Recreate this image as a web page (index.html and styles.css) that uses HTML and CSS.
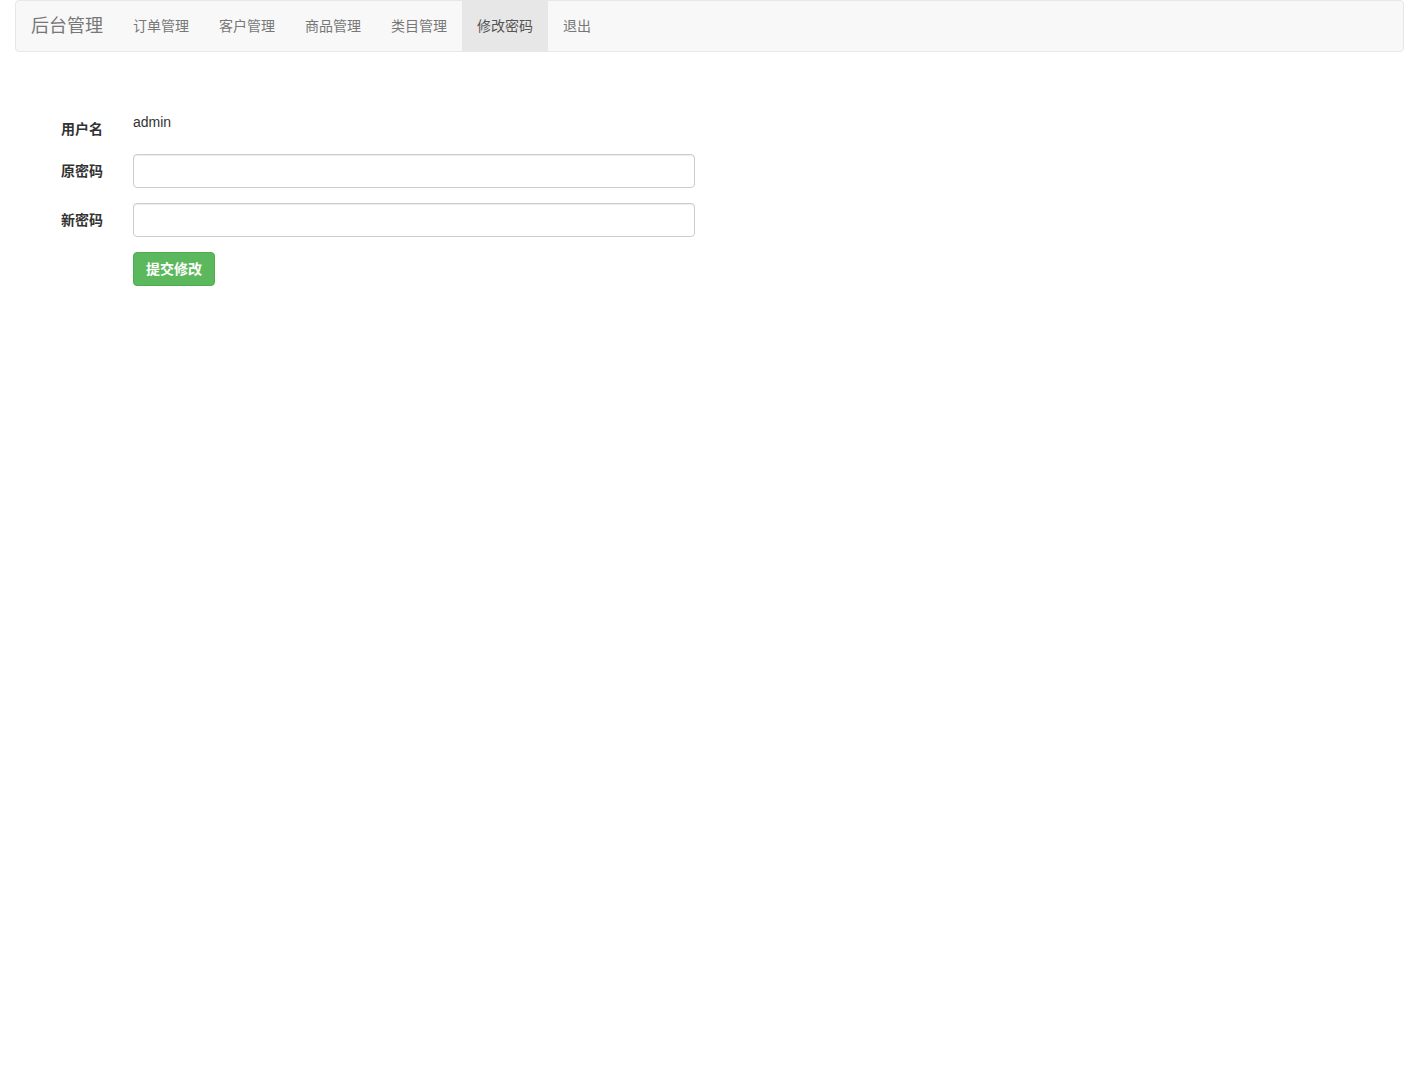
FILE: index.html
```html
<!DOCTYPE html>
<html lang="zh-CN">
<head>
<meta charset="utf-8">
<title>修改密码</title>
<link rel="stylesheet" href="styles.css">
</head>
<body>
<nav class="navbar">
  <a class="brand" href="#">后台管理</a>
  <ul class="nav">
    <li><a href="#">订单管理</a></li>
    <li><a href="#">客户管理</a></li>
    <li><a href="#">商品管理</a></li>
    <li><a href="#">类目管理</a></li>
    <li class="active"><a href="#">修改密码</a></li>
    <li><a href="#">退出</a></li>
  </ul>
</nav>
<form class="form">
  <div class="group">
    <label class="label">用户名</label>
    <div class="field"><span class="static">admin</span></div>
  </div>
  <div class="group">
    <label class="label">原密码</label>
    <div class="field"><input class="input" type="password"></div>
  </div>
  <div class="group">
    <label class="label">新密码</label>
    <div class="field"><input class="input" type="password"></div>
  </div>
  <div class="group">
    <div class="label"></div>
    <div class="field"><button class="btn" type="button">提交修改</button></div>
  </div>
</form>
</body>
</html>
```

FILE: styles.css
```css
* { box-sizing: border-box; }
html, body { margin: 0; padding: 0; background: #fff; }
body {
  font-family: "Liberation Sans", Arial, "Noto Sans CJK SC", sans-serif;
  font-size: 14px;
  line-height: 20px;
  color: #333;
}
.navbar {
  display: flex;
  align-items: stretch;
  height: 52px;
  margin: 0 15px 60px;
  background: #f8f8f8;
  border: 1px solid #e7e7e7;
  border-radius: 4px;
}
.brand {
  padding: 15px;
  font-size: 18px;
  line-height: 20px;
  color: #777;
  text-decoration: none;
}
.nav {
  list-style: none;
  margin: 0;
  padding: 0;
  display: flex;
}
.nav a {
  display: block;
  padding: 15px;
  line-height: 20px;
  color: #777;
  text-decoration: none;
}
.nav .active a {
  background: #e7e7e7;
  color: #555;
}
.form { width: 710px; }
.group {
  display: flex;
  margin-bottom: 15px;
}
.label {
  width: 118px;
  flex: none;
  padding: 7px 15px 0;
  text-align: right;
  font-weight: bold;
  color: #333;
}
.field {
  flex: 1;
  padding: 0 15px;
}
.static { display: block; line-height: 20px; }
.input {
  display: block;
  width: 100%;
  height: 34px;
  padding: 6px 12px;
  font-size: 14px;
  border: 1px solid #ccc;
  border-radius: 4px;
  box-shadow: inset 0 1px 1px rgba(0,0,0,.075);
  background: #fff;
  font-family: inherit;
}
.btn {
  height: 34px;
  padding: 6px 12px;
  font-size: 14px;
  line-height: 20px;
  font-family: inherit;
  font-weight: bold;
  color: #fff;
  background: #5cb85c;
  border: 1px solid #4cae4c;
  border-radius: 4px;
}
```
